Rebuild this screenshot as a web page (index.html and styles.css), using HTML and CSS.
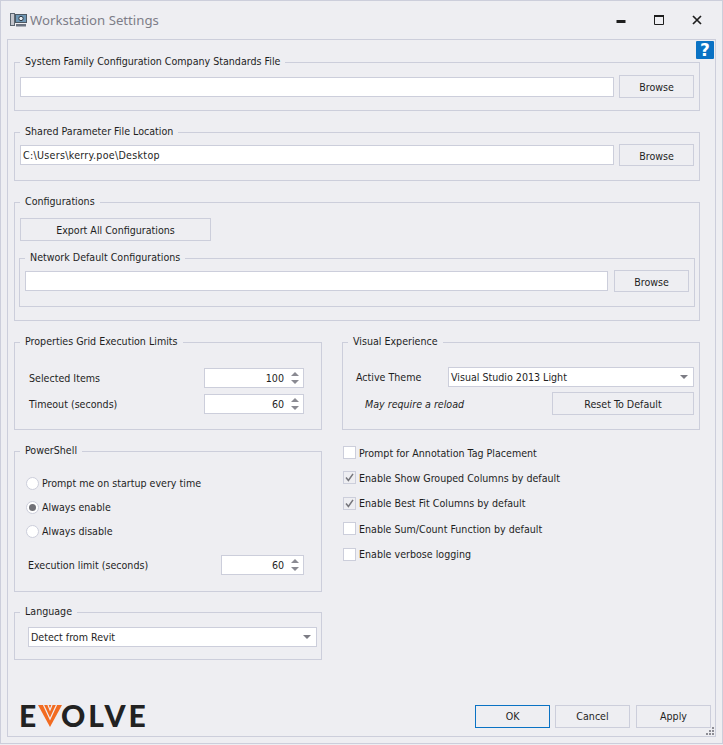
FILE: index.html
```html
<!DOCTYPE html>
<html lang="en">
<head>
<meta charset="utf-8">
<title>Workstation Settings</title>
<link rel="stylesheet" href="styles.css">
</head>
<body>
<div class="window">
  <header class="titlebar">
    <svg class="app-icon" width="17" height="14" viewBox="0 0 17 14">
      <rect x="0.5" y="0.5" width="4" height="12" fill="#c4c5cc" stroke="#5b6570"/>
      <rect x="5.5" y="1.5" width="11" height="8" fill="#6f97b5" stroke="#4d5863"/>
      <circle cx="11" cy="5.5" r="2.2" fill="#e8eef2" stroke="#2b3641"/>
      <rect x="6" y="11" width="10" height="2.5" fill="#6b7280"/>
    </svg>
    <span class="title">Workstation Settings</span>
    <div class="controls">
      <svg width="10" height="10" viewBox="0 0 10 10"><rect x="0.5" y="5" width="9" height="3" fill="#1e1e1e"/></svg>
      <svg width="10" height="10" viewBox="0 0 10 10"><path d="M.5 1.5h9v8h-9z" fill="none" stroke="#1e1e1e"/><rect width="10" height="2" fill="#1e1e1e"/></svg>
      <svg width="10" height="10" viewBox="0 0 10 10"><path d="M1 1l8 8M9 1l-8 8" fill="none" stroke="#1e1e1e" stroke-width="1.7"/></svg>
    </div>
  </header>

  <main class="panel">
    <div class="help">?</div>

    <fieldset class="group g-file">
      <legend>System Family Configuration Company Standards File</legend>
      <div class="file-row">
        <div class="field grow"></div>
        <button class="btn browse">Browse</button>
      </div>
    </fieldset>

    <fieldset class="group g-file g-shared">
      <legend>Shared Parameter File Location</legend>
      <div class="file-row">
        <div class="field grow path">C:\Users\kerry.poe\Desktop</div>
        <button class="btn browse">Browse</button>
      </div>
    </fieldset>

    <fieldset class="group g-config">
      <legend>Configurations</legend>
      <button class="btn export">Export All Configurations</button>
      <fieldset class="group g-file nested">
        <legend>Network Default Configurations</legend>
        <div class="file-row">
          <div class="field grow"></div>
          <button class="btn browse">Browse</button>
        </div>
      </fieldset>
    </fieldset>

    <div class="columns">
      <div class="col-left">
        <fieldset class="group g-limits">
          <legend>Properties Grid Execution Limits</legend>
          <div class="spin-row">
            <span>Selected Items</span>
            <div class="spin w100"><span>100</span><i class="arrows"></i></div>
          </div>
          <div class="spin-row">
            <span>Timeout (seconds)</span>
            <div class="spin w100"><span>60</span><i class="arrows"></i></div>
          </div>
        </fieldset>

        <fieldset class="group g-ps">
          <legend>PowerShell</legend>
          <label class="radio"><i class="dot"></i>Prompt me on startup every time</label>
          <label class="radio"><i class="dot on"></i>Always enable</label>
          <label class="radio"><i class="dot"></i>Always disable</label>
          <div class="spin-row exec">
            <span>Execution limit (seconds)</span>
            <div class="spin w83"><span>60</span><i class="arrows"></i></div>
          </div>
        </fieldset>

        <fieldset class="group g-lang">
          <legend>Language</legend>
          <div class="field combo">Detect from Revit<i class="caret"></i></div>
        </fieldset>
      </div>

      <div class="col-right">
        <fieldset class="group g-visual">
          <legend>Visual Experience</legend>
          <div class="theme-row">
            <span class="theme-label">Active Theme</span>
            <div class="field combo grow">Visual Studio 2013 Light<i class="caret"></i></div>
          </div>
          <div class="reset-row">
            <em>May require a reload</em>
            <button class="btn reset">Reset To Default</button>
          </div>
        </fieldset>

        <div class="checks">
          <label class="check"><i class="box"></i>Prompt for Annotation Tag Placement</label>
          <label class="check"><i class="box on"><svg width="13" height="13" viewBox="0 0 13 13"><path d="M3 6.5l2.4 3L10 2.8" fill="none" stroke="#75757b" stroke-width="1.5"/></svg></i>Enable Show Grouped Columns by default</label>
          <label class="check"><i class="box on"><svg width="13" height="13" viewBox="0 0 13 13"><path d="M3 6.5l2.4 3L10 2.8" fill="none" stroke="#75757b" stroke-width="1.5"/></svg></i>Enable Best Fit Columns by default</label>
          <label class="check"><i class="box"></i>Enable Sum/Count Function by default</label>
          <label class="check"><i class="box"></i>Enable verbose logging</label>
        </div>
      </div>
    </div>

    <footer class="footer">
      <div class="logo"><span class="logo-e">E</span><svg class="logo-v" width="24" height="22" viewBox="0 0 24 22"><path d="M0 0h24L12 22z" fill="#f26b21"/><path d="M5.5 0l6.5 14L18.5 0M10 0l2 5 2-5" fill="none" stroke="#eeeef3" stroke-width="1.2"/></svg><span class="logo-rest">OLVE</span></div>
      <div class="actions">
        <button class="btn action primary">OK</button>
        <button class="btn action">Cancel</button>
        <button class="btn action apply">Apply</button>
      </div>
    </footer>
    <svg class="grip" width="10" height="10" viewBox="0 0 10 10" fill="#8d8d95"><rect x="7" y="1" width="2" height="2"/><rect x="4" y="4" width="2" height="2"/><rect x="7" y="4" width="2" height="2"/><rect x="1" y="7" width="2" height="2"/><rect x="4" y="7" width="2" height="2"/><rect x="7" y="7" width="2" height="2"/></svg>
  </main>
</div>
</body>
</html>
```
FILE: styles.css
```css
* { box-sizing: border-box; }
html, body { margin: 0; padding: 0; }
body {
  width: 723px;
  height: 745px;
  background: #eeeef2;
  font-family: "DejaVu Sans Condensed", "DejaVu Sans", sans-serif;
  font-stretch: condensed;
  font-size: 10.6px;
  color: #1e1e1e;
  overflow: hidden;
}
.window {
  width: 723px;
  height: 744px;
  border: 1px solid #cccedb;
  display: flex;
  flex-direction: column;
  background: #eeeef2;
}
.titlebar {
  height: 38px;
  flex: none;
  display: flex;
  align-items: center;
  padding: 0 20px 0 9px;
}
.app-icon { flex: none; margin-right: 3px; }
.title { font: 13.2px "Noto Sans", sans-serif; color: #7d7d88; }
.controls { margin-left: auto; display: flex; gap: 28px; }
.panel {
  position: relative;
  margin: 0 6px 6px 6px;
  flex: 1;
  border: 1px solid #cccedb;
  padding: 15px 15px 0 6px;
  display: flex;
  flex-direction: column;
}
.help {
  position: absolute;
  right: 1px;
  top: 1px;
  width: 18px;
  height: 18px;
  background: #0a72c4;
  color: #fff;
  font: bold 17px/18px "DejaVu Sans", sans-serif;
  text-align: center;
  border-radius: 1px;
}
.group {
  --pl: 5px;
  margin: 0;
  border: 1px solid #cccedb;
  padding: 0 5px 0 var(--pl);
  min-width: 0;
}
.group legend {
  padding: 0 5px;
  margin-left: calc(5px - var(--pl));
  line-height: 12px;
  height: 14px;
}
.g-file { height: 56px; margin-bottom: 14px; }
.file-row { display: flex; gap: 5px; align-items: center; margin-top: 6px; }
.g-shared .file-row { margin-top: 5px; }
.g-shared .browse { height: 22px; padding-top: 1px; }
.path { letter-spacing: .3px; }
.grow { flex: 1; min-width: 0; }
.field {
  height: 20px;
  background: #fff;
  border: 1px solid #cccedb;
  padding: 0 2px;
  line-height: 18px;
  white-space: nowrap;
}
.btn {
  font: inherit;
  font-stretch: inherit;
  color: inherit;
  background: #eeeef2;
  border: 1px solid #cccedb;
  padding: 0;
}
.browse { width: 75px; height: 23px; flex: none; }
.g-config { height: 126px; margin-bottom: 14px; padding-top: 9px; }
.export { width: 191px; height: 23px; display: block; }
.nested { margin: 10px 0 0 -1px; width: 676px; }
.nested .file-row { gap: 6px; margin-top: 5px; }
.nested .browse { height: 22px; padding-top: 1px; }
.columns { display: flex; gap: 20px; flex: none; }
.col-left { width: 308px; flex: none; }
.col-right { flex: 1; min-width: 0; }
.g-limits { --pl: 14px; height: 95px; margin-bottom: 14px; padding-top: 19px; padding-right: 17px; }
.spin-row { display: flex; justify-content: space-between; align-items: center; height: 20px; margin-bottom: 6px; }
.spin {
  height: 20px;
  background: #fff;
  border: 1px solid #cccedb;
  text-align: right;
  line-height: 18px;
  padding-right: 19px;
  position: relative;
}
.w100 { width: 100px; }
.w83 { width: 83px; }
.arrows::before, .arrows::after {
  content: "";
  position: absolute;
  right: 4px;
  border-left: 4px solid transparent;
  border-right: 4px solid transparent;
}
.arrows::before { top: 3px; border-bottom: 4px solid #8a8a92; }
.arrows::after { bottom: 3px; border-top: 4px solid #8a8a92; }
.g-ps { --pl: 11px; height: 148px; margin-bottom: 13px; padding-top: 13px; padding-right: 17px; }
.radio { display: flex; align-items: center; height: 24px; gap: 3px; }
.dot {
  width: 13px;
  height: 13px;
  border-radius: 50%;
  border: 1px solid #cccedb;
  background: #fff;
  flex: none;
  position: relative;
}
.dot.on::after {
  content: "";
  position: absolute;
  inset: 2px;
  border-radius: 50%;
  background: #717177;
}
.g-ps .exec { margin-top: 12px; margin-left: 2px; }
.g-lang { --pl: 13px; height: 55px; padding-top: 8px; padding-right: 4px; }
.combo { position: relative; }
.caret {
  position: absolute;
  right: 5px;
  top: 7px;
  border-left: 4px solid transparent;
  border-right: 4px solid transparent;
  border-top: 4px solid #7c7c84;
}
.g-visual { --pl: 13px; height: 95px; padding-top: 18px; }
.theme-row { display: flex; align-items: center; }
.theme-label { width: 92px; flex: none; }
.reset-row { display: flex; justify-content: space-between; align-items: center; margin-top: 5px; }
.reset-row em { margin-left: 9px; }
.reset { width: 142px; height: 23px; }
.checks { margin-top: 9.9px; display: flex; flex-direction: column; }
.check { display: flex; align-items: center; height: 25.4px; gap: 3px; margin-left: 1px; }
.box {
  width: 13px;
  height: 13px;
  border: 1px solid #cccedb;
  background: #fff;
  flex: none;
  display: block;
  line-height: 0;
}
.box.on { background: #eeeef2; }
.box svg { margin: -1px; }
.footer {
  margin-top: auto;
  margin-bottom: 7px;
  display: flex;
  align-items: center;
  justify-content: space-between;
  margin-right: -11px;
  margin-left: 5px;
}
.logo {
  display: flex;
  align-items: center;
  font: 900 30px/24px "Lato", sans-serif;
  font-stretch: normal;
  color: #222;
}
.logo-e { width: 19px; padding-bottom: 2px; }
.logo-v { margin-right: -1px; }
.logo-rest { letter-spacing: 3px; padding-bottom: 2px; }
.actions { display: flex; gap: 5px; }
.action { width: 75px; height: 23px; }
.apply { margin-left: 1px; }
.primary { border-color: #0a72c4; }
.grip { position: absolute; right: 0; bottom: 0; }
```
